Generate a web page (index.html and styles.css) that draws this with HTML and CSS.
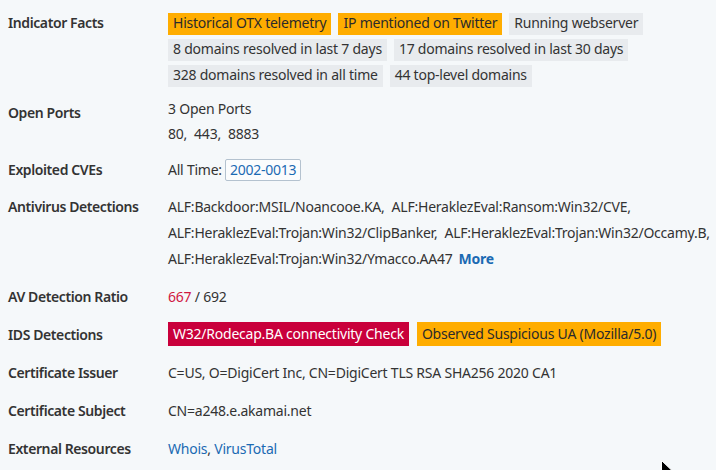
FILE: index.html
```html
<!DOCTYPE html>
<html lang="en">
<head>
<meta charset="utf-8">
<title>Indicator details</title>
<link rel="stylesheet" href="styles.css">
</head>
<body>
<div class="details">
  <div class="row row-first">
    <div class="label">Indicator Facts</div>
    <div class="value tags">
      <span class="tag tag-warn">Historical OTX telemetry</span>
      <span class="tag tag-warn">IP mentioned on Twitter</span>
      <span class="tag">Running webserver</span>
      <span class="tag">8 domains resolved in last 7 days</span>
      <span class="tag">17 domains resolved in last 30 days</span>
      <span class="tag">328 domains resolved in all time</span>
      <span class="tag">44 top-level domains</span>
    </div>
  </div>
  <div class="row">
    <div class="label label-low">Open Ports</div>
    <div class="value">
      <div>3 Open Ports</div>
      <div class="ports"><span class="item">80,</span><span class="item">443,</span><span class="item">8883</span></div>
    </div>
  </div>
  <div class="row row-compact">
    <div class="label">Exploited CVEs</div>
    <div class="value">All Time:<a class="cve" href="#">2002-0013</a></div>
  </div>
  <div class="row">
    <div class="label">Antivirus Detections</div>
    <div class="value">
      <div><span class="item">ALF:Backdoor:MSIL/Noancooe.KA,</span><span class="item">ALF:HeraklezEval:Ransom:Win32/CVE,</span></div>
      <div><span class="item">ALF:HeraklezEval:Trojan:Win32/ClipBanker,</span><span class="item">ALF:HeraklezEval:Trojan:Win32/Occamy.B,</span></div>
      <div><span>ALF:HeraklezEval:Trojan:Win32/Ymacco.AA47</span><a class="more" href="#">More</a></div>
    </div>
  </div>
  <div class="row">
    <div class="label">AV Detection Ratio</div>
    <div class="value"><span class="hits">667</span> / 692</div>
  </div>
  <div class="row">
    <div class="label">IDS Detections</div>
    <div class="value tags tags-ids">
      <span class="tag tag-danger">W32/Rodecap.BA connectivity Check</span>
      <span class="tag tag-warn">Observed Suspicious UA (Mozilla/5.0)</span>
    </div>
  </div>
  <div class="row">
    <div class="label">Certificate Issuer</div>
    <div class="value">C=US, O=DigiCert Inc, CN=DigiCert TLS RSA SHA256 2020 CA1</div>
  </div>
  <div class="row">
    <div class="label">Certificate Subject</div>
    <div class="value">CN=a248.e.akamai.net</div>
  </div>
  <div class="row">
    <div class="label">External Resources</div>
    <div class="value"><a class="link" href="#">Whois</a>, <a class="link" href="#">VirusTotal</a></div>
  </div>
</div>
<svg class="cursor" width="12" height="18" viewBox="0 0 12 18" aria-hidden="true">
  <path d="M0.5 0.5 L0.5 15 L4 11.5 L6.5 17 L8.5 16 L6 10.5 L11 10.5 Z" fill="#000" stroke="#fff" stroke-width="1"/>
</svg>
</body>
</html>
```
FILE: styles.css
```css
html, body {
  margin: 0;
  padding: 0;
  background: #f5f8fa;
}

body {
  font-family: "Noto Sans", "Open Sans", sans-serif;
  font-size: 14px;
  line-height: 26px;
  color: #333333;
  width: 716px;
  height: 470px;
  overflow: hidden;
  position: relative;
}

.details {
  padding: 4px 0 0 8px;
}

.row {
  display: grid;
  grid-template-columns: 160px 1fr;
  padding: 6px 0;
}

.row-first {
  padding-bottom: 3px;
}

.row-compact {
  line-height: 24px;
}

.label {
  font-weight: 600;
  letter-spacing: -0.4px;
  color: #333333;
}

.label-low {
  padding-top: 4px;
}

.value {
  min-width: 0;
  white-space: nowrap;
  letter-spacing: -0.23px;
}

.ports {
  line-height: 24px;
}

.item {
  margin-right: 7px;
}

.tags {
  display: flex;
  flex-wrap: wrap;
  gap: 4px 7px;
  padding-top: 3px;
  white-space: nowrap;
}

.tag {
  display: block;
  height: 22px;
  line-height: 20px;
  padding: 0 5px 2px;
  box-sizing: border-box;
  background: #e8ebee;
  color: #333333;
}

.tag-warn {
  background: #ffad00;
  color: #2b2b2b;
}

.tag-danger {
  background: #c9003b;
  color: #ffffff;
}

.tags-ids {
  padding-top: 0;
  gap: 4px 8px;
}

.tags-ids .tag {
  height: 24px;
  line-height: 24px;
  padding: 0 5px;
}

.cve {
  display: inline-block;
  margin-left: 3px;
  line-height: 20px;
  padding: 0 4px;
  border: 1px solid #b4c2cf;
  border-radius: 2px;
  background: #fbfcfd;
  color: #1b6ab3;
  text-decoration: none;
}

.more {
  font-weight: 700;
  color: #1b6ab3;
  text-decoration: none;
  margin-left: 6px;
}

.hits {
  color: #d0173f;
}

.link {
  color: #1b6ab3;
  text-decoration: none;
}

.cursor {
  position: absolute;
  left: 661px;
  top: 460px;
}
```
